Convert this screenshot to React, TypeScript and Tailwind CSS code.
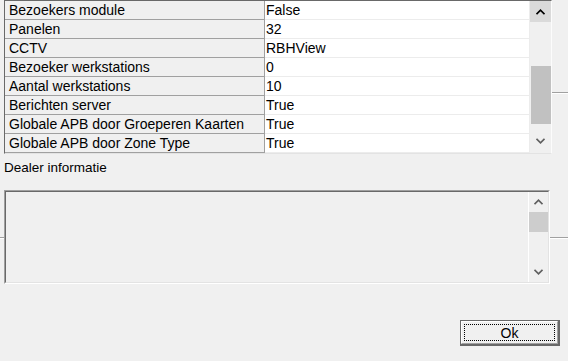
import React from "react";

const rows: [string, string][] = [
  ["Bezoekers module", "False"],
  ["Panelen", "32"],
  ["CCTV", "RBHView"],
  ["Bezoeker werkstations", "0"],
  ["Aantal werkstations", "10"],
  ["Berichten server", "True"],
  ["Globale APB door Groeperen Kaarten", "True"],
  ["Globale APB door Zone Type", "True"],
];

function Chevron({ up, color }: { up: boolean; color: string }) {
  return (
    <svg width="9" height="6" viewBox="0 0 9 6">
      <polyline
        points={up ? "0.5,5.2 4.5,1.2 8.5,5.2" : "0.5,0.8 4.5,4.8 8.5,0.8"}
        fill="none"
        stroke={color}
        strokeWidth="1.7"
      />
    </svg>
  );
}

export default function App() {
  return (
    <div
      className="w-[568px] h-[361px] bg-[#f0f0f0] flex flex-col overflow-hidden text-black"
      style={{ fontFamily: '"Liberation Sans", Arial, sans-serif' }}
    >
      {/* Property grid */}
      <div className="flex">
        <div className="w-[4px]" />
        <div className="w-[548px] h-[154px] flex border-t border-l border-t-[#696969] border-l-[#696969] border-r border-b border-r-[#fcfcfc] border-b-[#e3e3e3]">
          <div className="w-[525px] flex flex-col">
            {rows.map(([k, v]) => (
              <div key={k} className="flex h-[19px]">
                <div className="w-[260px] bg-[#f0f0f0] border-r border-b border-[#a0a0a0] pl-[4px] text-[14px] leading-[18px] whitespace-nowrap overflow-hidden">
                  {k}
                </div>
                <div className="w-[265px] bg-white border-r border-b border-[#ececec] pl-[1px] text-[14px] leading-[18px] whitespace-nowrap overflow-hidden">
                  {v}
                </div>
              </div>
            ))}
          </div>
          <div className="w-[21px] flex flex-col bg-[#f0f0f0]">
            <div className="h-[21px] bg-[#dadada] flex items-center justify-center">
              <Chevron up color="#000000" />
            </div>
            <div className="h-[44px]" />
            <div className="h-[58px] ml-[1px] bg-[#c1c1c1]" />
            <div className="flex-1 flex items-center justify-center pt-[4px]">
              <Chevron up={false} color="#606060" />
            </div>
          </div>
        </div>
        <div className="flex-1">
          <div className="mt-[92px] h-px bg-[#a0a0a0]" />
          <div className="h-px bg-white" />
        </div>
      </div>

      {/* Label */}
      <div className="pl-[4px] mt-[6px] text-[13.5px] leading-[16px] text-[#000]">
        Dealer informatie
      </div>

      {/* Memo */}
      <div className="flex mt-[14px]">
        <div className="w-[4px]">
          <div className="mt-[47px] h-px bg-[#a0a0a0]" />
          <div className="h-px bg-white" />
        </div>
        <div className="w-[546px] h-[94px] border-t border-l border-t-[#a0a0a0] border-l-[#a0a0a0] border-r border-b border-r-white border-b-white">
          <div className="h-full border-t border-l border-t-[#696969] border-l-[#696969] border-r border-b border-r-[#e3e3e3] border-b-[#e3e3e3] flex justify-end bg-[#f0f0f0]">
            <div className="w-[20px] border-l border-white flex flex-col">
              <div className="h-[20px] flex items-center justify-center">
                <Chevron up color="#606060" />
              </div>
              <div className="h-[20px] bg-[#cdcdcd]" />
              <div className="flex-1" />
              <div className="h-[20px] flex items-center justify-center">
                <Chevron up={false} color="#606060" />
              </div>
            </div>
          </div>
        </div>
        <div className="flex-1">
          <div className="mt-[47px] h-px bg-[#a0a0a0]" />
          <div className="h-px bg-white" />
        </div>
      </div>

      {/* Button */}
      <div className="flex justify-end pr-[8px] mt-[36px]">
        <div className="w-[100px] h-[26px] border border-[#696969] border-r-2 border-b-2">
          <div className="h-full border-t border-l border-white border-r border-b border-r-[#a0a0a0] border-b-[#a0a0a0] p-[2px]">
            <div className="h-full border border-dotted border-black flex items-center justify-center text-[14px] leading-none">
              Ok
            </div>
          </div>
        </div>
      </div>
    </div>
  );
}
